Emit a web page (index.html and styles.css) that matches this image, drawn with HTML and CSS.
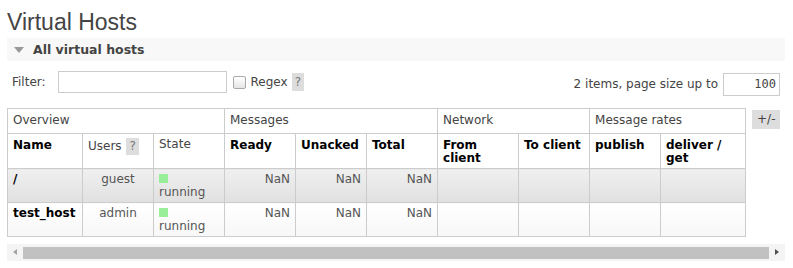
FILE: index.html
```html
<!DOCTYPE html>
<html lang="en">
<head>
    <meta charset="UTF-8">
    <title>Virtual Hosts</title>
    <link rel="stylesheet" href="styles.css">
</head>
<body>
<h1>Virtual Hosts</h1>

<div class="section">
    <div class="section-head"><span class="arrow"></span>All virtual hosts</div>

    <div class="filter-row">
        <div class="filter-left">
            <label>Filter:</label>
            <input type="text" class="filter-input">
            <span class="check"></span>
            <span>Regex</span>
            <span class="help">?</span>
        </div>
        <div class="filter-right">
            <span>2 items, page size up to</span>
            <input type="text" class="page-size" value="100">
        </div>
    </div>

    <div class="table-wrap">
        <table class="list">
            <colgroup>
                <col style="width:75px"><col style="width:71px"><col style="width:71px">
                <col style="width:71px"><col style="width:71px"><col style="width:71px">
                <col style="width:81px"><col style="width:71px"><col style="width:71px">
                <col style="width:85px">
            </colgroup>
            <thead>
                <tr class="groups">
                    <th colspan="3">Overview</th>
                    <th colspan="3">Messages</th>
                    <th colspan="2">Network</th>
                    <th colspan="2">Message rates</th>
                </tr>
                <tr class="cols">
                    <th>Name</th>
                    <th class="plain">Users <span class="help">?</span></th>
                    <th class="plain">State</th>
                    <th>Ready</th>
                    <th>Unacked</th>
                    <th>Total</th>
                    <th>From<br>client</th>
                    <th>To client</th>
                    <th>publish</th>
                    <th>deliver /<br>get</th>
                </tr>
            </thead>
            <tbody>
                <tr class="alt1">
                    <td class="name">/</td>
                    <td class="c">guest</td>
                    <td><span class="ok"></span><br>running</td>
                    <td class="r">NaN</td>
                    <td class="r">NaN</td>
                    <td class="r">NaN</td>
                    <td></td><td></td><td></td><td></td>
                </tr>
                <tr class="alt2">
                    <td class="name">test_host</td>
                    <td class="c">admin</td>
                    <td><span class="ok"></span><br>running</td>
                    <td class="r">NaN</td>
                    <td class="r">NaN</td>
                    <td class="r">NaN</td>
                    <td></td><td></td><td></td><td></td>
                </tr>
            </tbody>
        </table>
        <span class="toggle">+/-</span>
    </div>

    <div class="hscroll">
        <span class="sbtn left"></span>
        <span class="thumb"></span>
        <span class="sbtn right"></span>
    </div>
</div>
</body>
</html>
```

FILE: styles.css
```css
body {
    margin: 0;
    padding: 0 8px 0 7px;
    font-family: "DejaVu Sans", Verdana, sans-serif;
    font-size: 12px;
    color: #444;
    background: #fff;
}
h1 {
    margin: 0;
    padding: 7px 0 0 0;
    height: 31px;
    font-family: "Liberation Sans", Arial, sans-serif;
    font-size: 23px;
    font-weight: normal;
    color: #444;
    line-height: 30px;
}
.section-head {
    height: 23px;
    line-height: 22px;
    background: #f8f8f8;
    font-weight: bold;
    color: #444;
    font-size: 12.5px;
    padding-left: 7px;
    display: flex;
    align-items: center;
}
.arrow {
    width: 0;
    height: 0;
    border-left: 5px solid transparent;
    border-right: 5px solid transparent;
    border-top: 6px solid #999;
    margin-right: 9px;
    margin-top: 1px;
}
.filter-row {
    display: flex;
    justify-content: space-between;
    align-items: center;
    padding: 9px 5px 0 5px;
    height: 24px;
}
.filter-left, .filter-right {
    display: flex;
    align-items: center;
}
.filter-input {
    width: 169px;
    margin: 0 0 0 12px;
    padding: 0;
    border: 1px solid #ccc;
    box-sizing: border-box;
    height: 22px;
}
.check {
    width: 11px;
    height: 11px;
    border: 1px solid #aaa;
    border-radius: 2px;
    background: linear-gradient(#fff, #e6e6e6);
    margin: 0 5px 0 6px;
}
.help {
    display: inline-block;
    background: #ddd;
    color: #777;
    padding: 0 3px;
    line-height: 18px;
    margin-left: 4px;
}
.filter-right span { margin-top: 4px; }
.page-size {
    width: 57px;
    height: 23px;
    box-sizing: border-box;
    margin: 4px 0 0 5px;
    border: 1px solid #ccc;
    text-align: right;
    font-family: "DejaVu Sans Mono", monospace;
    font-size: 12px;
    color: #444;
    padding: 0 3px 0 0;
}
.table-wrap {
    display: flex;
    align-items: flex-start;
    margin-top: 14px;
}
.list {
    border-collapse: collapse;
    table-layout: fixed;
    width: 738px;
}
.list th, .list td {
    border: 1px solid #ccc;
    text-align: left;
    vertical-align: top;
    padding: 3px 5px;
    line-height: 13px;
}
.groups th {
    font-weight: normal;
    height: 16px;
    padding-top: 5px;
}
.cols th {
    font-weight: bold;
    color: #000;
    height: 26px;
    padding-top: 5px;
    line-height: 13px;
}
.cols th.plain {
    font-weight: normal;
    color: #444;
    padding-top: 4px;
}
.cols .help { line-height: 17px; margin-left: 1px; }
.list td {
    height: 23px;
    color: #555;
    padding-top: 4px;
    padding-bottom: 3px;
}
.list td.name { font-weight: bold; color: #000; }
.list td.c { text-align: center; }
.list td.r { text-align: right; }
.alt1 td { background: linear-gradient(#f0f0f0, #e0e0e0); }
.alt2 td { background: linear-gradient(#fff, #f7f7f7); }
.ok {
    display: inline-block;
    width: 9px;
    height: 9px;
    background: #99ee99;
    vertical-align: top;
    margin-top: 1px;
}
.toggle {
    background: #ddd;
    color: #444;
    margin: 2px 0 0 6px;
    padding: 0 5px;
    line-height: 19px;
}
.hscroll {
    display: flex;
    align-items: center;
    margin-top: 7px;
    width: 778px;
    height: 17px;
    background: #f4f4f4;
}
.thumb {
    flex: 1;
    height: 12px;
    background: #c1c1c1;
}
.sbtn {
    width: 16px;
    height: 17px;
    position: relative;
}
.sbtn.left::after, .sbtn.right::after {
    content: "";
    position: absolute;
    top: 5px;
    border-top: 3.5px solid transparent;
    border-bottom: 3.5px solid transparent;
}
.sbtn.left::after { left: 6px; border-right: 4px solid #a3a3a3; }
.sbtn.right::after { left: 6px; border-left: 4px solid #505050; }
```
